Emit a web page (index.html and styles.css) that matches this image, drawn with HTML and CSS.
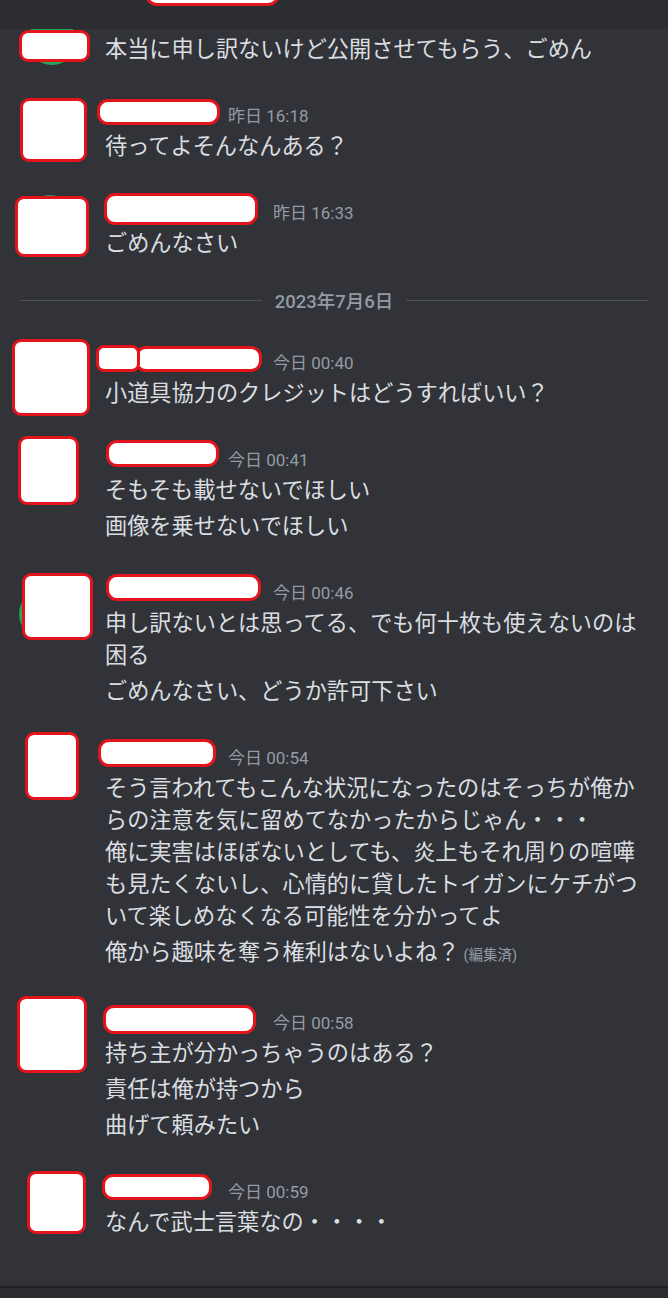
FILE: index.html
```html
<!DOCTYPE html>
<html lang="ja">
<head>
<meta charset="utf-8">
<title>Chat</title>
<link rel="stylesheet" href="styles.css">
</head>
<body>
<div class="app">
  <header class="topbar"><span class="redact redact-top"></span></header>
  <main class="chat">
    <section class="group g1">
      <span class="ring"></span>
      <span class="redact avatar"></span>
      <p class="msg">本当に申し訳ないけど公開させてもらう、ごめん</p>
    </section>

    <section class="group g2">
      <span class="redact avatar"></span>
      <div class="header">
        <span class="name short"><span class="redact nm"></span></span>
        <time class="ts">昨日 16:18</time>
      </div>
      <p class="msg">待ってよそんなんある？</p>
    </section>

    <section class="group g3">
      <span class="ring"></span>
      <span class="redact avatar"></span>
      <div class="header">
        <span class="name long"><span class="redact nm"></span></span>
        <time class="ts">昨日 16:33</time>
      </div>
      <p class="msg">ごめんなさい</p>
    </section>

    <div class="divider"><span>2023年7月6日</span></div>

    <section class="group g4">
      <span class="redact avatar"></span>
      <div class="header">
        <span class="name long"><span class="redact nm"></span><span class="redact nm2"></span></span>
        <time class="ts">今日 00:40</time>
      </div>
      <p class="msg">小道具協力のクレジットはどうすればいい？</p>
    </section>

    <section class="group g5">
      <span class="redact avatar"></span>
      <div class="header">
        <span class="name short"><span class="redact nm"></span></span>
        <time class="ts">今日 00:41</time>
      </div>
      <p class="msg">そもそも載せないでほしい</p>
      <p class="msg">画像を乗せないでほしい</p>
    </section>

    <section class="group g6">
      <span class="ring"></span>
      <span class="redact avatar"></span>
      <div class="header">
        <span class="name long"><span class="redact nm"></span></span>
        <time class="ts">今日 00:46</time>
      </div>
      <p class="msg">申し訳ないとは思ってる、でも何十枚も使えないのは困る</p>
      <p class="msg">ごめんなさい、どうか許可下さい</p>
    </section>

    <section class="group g7">
      <span class="redact avatar"></span>
      <div class="header">
        <span class="name short"><span class="redact nm"></span></span>
        <time class="ts">今日 00:54</time>
      </div>
      <p class="msg">そう言われてもこんな状況になったのはそっちが俺からの注意を気に留めてなかったからじゃん・・・<br>俺に実害はほぼないとしても、炎上もそれ周りの喧嘩も見たくないし、心情的に貸したトイガンにケチがついて楽しめなくなる可能性を分かってよ</p>
      <p class="msg">俺から趣味を奪う権利はないよね？<span class="edited">(編集済)</span></p>
    </section>

    <section class="group g8">
      <span class="redact avatar"></span>
      <div class="header">
        <span class="name long"><span class="redact nm"></span></span>
        <time class="ts">今日 00:58</time>
      </div>
      <p class="msg">持ち主が分かっちゃうのはある？</p>
      <p class="msg">責任は俺が持つから</p>
      <p class="msg">曲げて頼みたい</p>
    </section>

    <section class="group g9">
      <span class="redact avatar"></span>
      <div class="header">
        <span class="name short"><span class="redact nm"></span></span>
        <time class="ts">今日 00:59</time>
      </div>
      <p class="msg">なんで武士言葉なの・・・・</p>
    </section>
  </main>
  <footer class="composer"></footer>
</div>
</body>
</html>
```

FILE: styles.css
```css
* { box-sizing: border-box; }

html, body {
  margin: 0;
  padding: 0;
  height: 100%;
}

body {
  background: #313338;
  color: #dbdee1;
  font-family: Roboto, "Noto Sans CJK JP", "Noto Sans", sans-serif;
}

.app {
  display: flex;
  flex-direction: column;
  height: 100vh;
}

.topbar {
  position: relative;
  flex: none;
  height: 29px;
  background: #2b2d31;
  border-bottom: 1px solid #292b2f;
  overflow: hidden;
}

.redact {
  display: block;
  background: #ffffff;
  border: 3px solid #e3141c;
  border-radius: 9px;
}

.redact-top {
  position: absolute;
  left: 145px;
  top: -22px;
  width: 135px;
  height: 28px;
  border-radius: 12px;
}

.chat {
  flex: 1;
  overflow: hidden;
  padding: 2px 22px 0 0;
}

.group {
  position: relative;
  padding-left: 105px;
  margin-top: 37px;
}

.group.g1 { margin-top: 0; }

.avatar {
  position: absolute;
  left: var(--x);
  top: var(--y);
  width: var(--w);
  height: var(--h);
  z-index: 2;
}

.ring {
  position: absolute;
  left: var(--rx);
  top: var(--ry);
  width: var(--rs);
  height: var(--rs);
  border-radius: 50%;
  background: #23a55a;
  z-index: 1;
}

.header {
  display: flex;
  align-items: center;
  height: 24px;
}

.name {
  position: relative;
  flex: none;
  height: 24px;
}

.name.short { width: 115px; }
.name.long { width: 160px; }

.nm, .nm2 {
  position: absolute;
  left: var(--nx);
  top: var(--ny);
  width: var(--nw);
  height: var(--nh);
  border-radius: 11px;
}

.ts {
  margin-left: 8px;
  font-size: 17px;
  line-height: 24px;
  color: #949ba4;
  white-space: nowrap;
}

.msg {
  margin: 0;
  padding: 2px 0;
  font-size: 22.2px;
  line-height: 32px;
  color: #dbdee1;
}

.edited {
  margin-left: 4px;
  font-size: 14.5px;
  color: #949ba4;
}

.divider {
  display: flex;
  align-items: center;
  gap: 13px;
  height: 28px;
  margin: 25px -2px 0 20px;
  font-size: 18.5px;
  font-weight: 500;
  color: #949ba4;
}

.divider::before,
.divider::after {
  content: "";
  flex: 1;
  height: 1px;
  background: #4e5058;
}

.composer {
  flex: none;
  height: 12px;
  background: #2b2d31;
  border-top: 2px solid #1e1f22;
}

/* per-message redaction geometry */
.g1 .avatar { --x: 19px; --y: -1px; --w: 71px; --h: 32px; }
.g1 .ring { --rx: 28px; --ry: -14px; --rs: 48px; }

.g2 .avatar { --x: 20px; --y: -6px; --w: 67px; --h: 64px; }
.g2 .nm { --nx: -8px; --ny: -5px; --nw: 123px; --nh: 26px; }

.g3 .avatar { --x: 15px; --y: -5px; --w: 74px; --h: 61px; }
.g3 .ring { --rx: 26px; --ry: -6px; --rs: 48px; }
.g3 .nm { --nx: -1px; --ny: -8px; --nw: 154px; --nh: 32px; }

.g4 .avatar { --x: 12px; --y: -12px; --w: 78px; --h: 77px; }
.g4 .nm { --nx: 30px; --ny: -5px; --nw: 127px; --nh: 26px; }
.g4 .nm2 { --nx: -9px; --ny: -6px; --nw: 44px; --nh: 27px; border-radius: 8px; }

.g5 .avatar { --x: 18px; --y: -12px; --w: 61px; --h: 69px; }
.g5 .nm { --nx: 1px; --ny: -8px; --nw: 113px; --nh: 27px; }

.g6 .avatar { --x: 22px; --y: -8px; --w: 71px; --h: 67px; }
.g6 .ring { --rx: 19px; --ry: 8px; --rs: 50px; }
.g6 .nm { --nx: 1px; --ny: -7px; --nw: 155px; --nh: 27px; }

.g7 .avatar { --x: 25px; --y: -14px; --w: 54px; --h: 68px; }
.g7 .nm { --nx: -7px; --ny: -7px; --nw: 118px; --nh: 28px; }

.g8 .avatar { --x: 17px; --y: -15px; --w: 70px; --h: 77px; }
.g8 .nm { --nx: -2px; --ny: -6px; --nw: 153px; --nh: 29px; }

.g9 .avatar { --x: 27px; --y: -9px; --w: 59px; --h: 63px; }
.g9 .nm { --nx: -3px; --ny: -6px; --nw: 110px; --nh: 26px; }
```
